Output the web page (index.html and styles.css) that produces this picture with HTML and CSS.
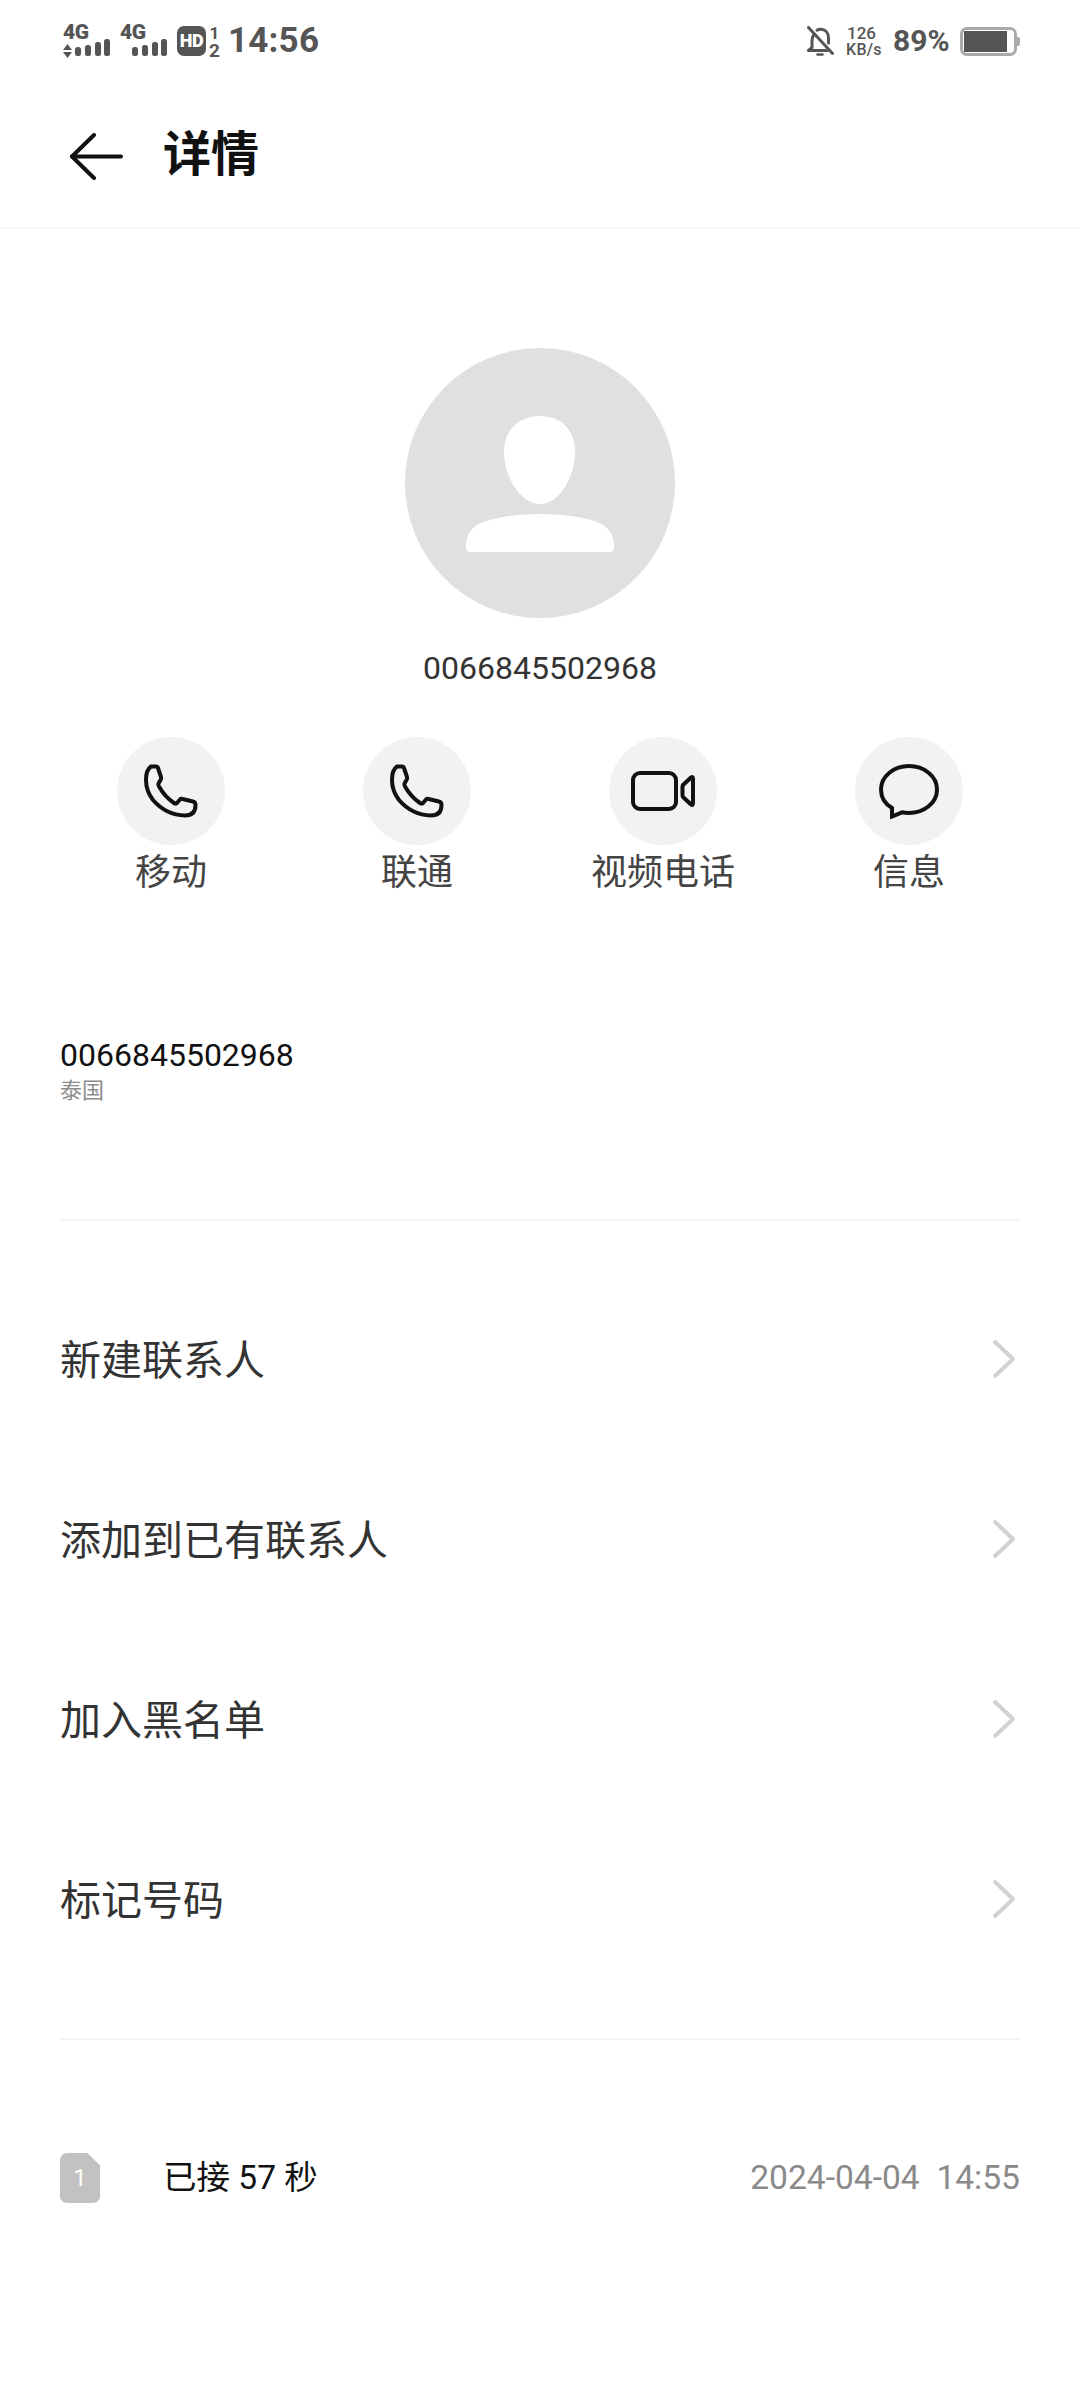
FILE: index.html
```html
<!DOCTYPE html>
<html lang="zh-CN">
<head>
<meta charset="utf-8">
<title>详情</title>
<link rel="stylesheet" href="styles.css">
</head>
<body>
<div class="page">
  <div class="status">
    <div class="status-left">
      <div class="sig">
        <span class="sig-label">4G</span>
        <svg class="sig-bars" width="47" height="19" viewBox="0 0 47 19"><path d="M4.5 5L9 11H0Z M4.5 19L0 13H9Z" fill="#555"/><rect x="12" y="8" width="6" height="9" rx="2.5" fill="#555"/><rect x="22" y="6" width="6" height="11" rx="2.5" fill="#555"/><rect x="32" y="3" width="6" height="14" rx="2.5" fill="#555"/><rect x="41" y="0" width="6" height="17" rx="2.5" fill="#555"/></svg>
      </div>
      <div class="sig">
        <span class="sig-label">4G</span>
        <svg class="sig-bars" width="47" height="19" viewBox="0 0 47 19"><rect x="12" y="8" width="6" height="9" rx="2.5" fill="#555"/><rect x="22" y="6" width="6" height="11" rx="2.5" fill="#555"/><rect x="32" y="3" width="6" height="14" rx="2.5" fill="#555"/><rect x="41" y="0" width="6" height="17" rx="2.5" fill="#555"/></svg>
      </div>
      <span class="hd">HD</span>
      <div class="sim-nums"><span class="sim-one">1</span><span class="sim-two">2</span></div>
      <span class="time">14:56</span>
    </div>
    <div class="status-right">
      <svg class="bell" width="27" height="30" viewBox="0 0 27 30" fill="none" stroke="#555" stroke-width="3" stroke-linecap="round" stroke-linejoin="round"><path d="M7 8.5C5.5 10.5 5 12.5 5 15V21.5L1.5 24.5H20.5"/><path d="M10 4.2C11 3.6 12.3 3.2 13.5 3.2C18.5 3.2 21.5 7 21.5 12V17"/><path d="M1.5 1.5L25.5 27.5"/><path d="M10.5 28.5H15.5" stroke-width="2.5"/></svg>
      <div class="speed"><span class="speed-val">126</span><span class="speed-unit">KB/s</span></div>
      <span class="pct">89%</span>
      <div class="battery"><div class="battery-fill"></div></div>
      <div class="battery-nub"></div>
    </div>
  </div>

  <header class="header">
    <svg class="back" width="54" height="47" viewBox="0 0 54 47" fill="none" stroke="#111" stroke-width="4" stroke-linecap="round" stroke-linejoin="round"><path d="M25 2L3 23.5L25 45"/><path d="M3 23.5H52"/></svg>
    <h1 class="title">详情</h1>
  </header>

  <section class="profile">
    <div class="avatar">
      <svg width="148" height="136" viewBox="0 0 148 136" fill="#fff"><path d="M74 0C95 0 109 14 109 36C109 60 94 88 74 88C54 88 38 60 38 36C38 14 53 0 74 0Z"/><path d="M74 98C100 98 120 102 131 106C142 110 148 118 148 131Q148 136 144 136H4Q0 136 0 131C0 118 6 110 17 106C28 102 48 98 74 98Z"/></svg>
    </div>
    <div class="profile-number">0066845502968</div>
  </section>

  <section class="actions">
    <div class="action">
      <div class="action-circle">
        <svg width="54" height="54" viewBox="0 0 54 54" fill="none" stroke="#111" stroke-width="4" stroke-linejoin="round"><path d="M7 2.5L12 2.5Q13.5 2.5 14 4L17 13Q17.5 14.5 16.5 16L14.5 19.5Q14 21 15 22.5Q21 33 30 39Q31.5 40 33 39L36 35.5Q37 34.5 38.5 35L49 37.5Q51.5 38 51.5 41Q51.5 51.5 41 51.5Q22 51 9 36Q2 27 2 16Q2 6 7 2.5Z"/></svg>
      </div>
      <span class="action-label">移动</span>
    </div>
    <div class="action">
      <div class="action-circle">
        <svg width="54" height="54" viewBox="0 0 54 54" fill="none" stroke="#111" stroke-width="4" stroke-linejoin="round"><path d="M7 2.5L12 2.5Q13.5 2.5 14 4L17 13Q17.5 14.5 16.5 16L14.5 19.5Q14 21 15 22.5Q21 33 30 39Q31.5 40 33 39L36 35.5Q37 34.5 38.5 35L49 37.5Q51.5 38 51.5 41Q51.5 51.5 41 51.5Q22 51 9 36Q2 27 2 16Q2 6 7 2.5Z"/></svg>
      </div>
      <span class="action-label">联通</span>
    </div>
    <div class="action">
      <div class="action-circle">
        <svg width="64" height="40" viewBox="0 0 64 40" fill="none" stroke="#111" stroke-width="4" stroke-linejoin="round"><rect x="2" y="2" width="43" height="36" rx="7"/><path d="M52 14L60 6.5Q62 5 62 8V32Q62 35 60 33.5L52 26Q51.5 25 51.5 24V16Q51.5 15 52 14Z"/></svg>
      </div>
      <span class="action-label">视频电话</span>
    </div>
    <div class="action">
      <div class="action-circle">
        <svg width="60" height="55" viewBox="0 0 60 55" fill="none" stroke="#111" stroke-width="4" stroke-linejoin="miter"><path d="M13 44C6 40 2 33 2 25.5C2 12 15 2 30 2C45 2 58 12 58 25.5C58 39 45 49 30 49C27 49 25 48.8 23 48.3L13 52.5Z"/></svg>
      </div>
      <span class="action-label">信息</span>
    </div>
  </section>

  <section class="detail">
    <div class="detail-number">0066845502968</div>
    <div class="detail-region">泰国</div>
  </section>

  <section class="menu">
    <div class="menu-row"><span class="menu-text">新建联系人</span><svg class="chev" width="24" height="40" viewBox="0 0 24 40" fill="none" stroke="#d2d2d2" stroke-width="4" stroke-linecap="round" stroke-linejoin="round"><path d="M3 3L21 20L3 37"/></svg></div>
    <div class="menu-row"><span class="menu-text">添加到已有联系人</span><svg class="chev" width="24" height="40" viewBox="0 0 24 40" fill="none" stroke="#d2d2d2" stroke-width="4" stroke-linecap="round" stroke-linejoin="round"><path d="M3 3L21 20L3 37"/></svg></div>
    <div class="menu-row"><span class="menu-text">加入黑名单</span><svg class="chev" width="24" height="40" viewBox="0 0 24 40" fill="none" stroke="#d2d2d2" stroke-width="4" stroke-linecap="round" stroke-linejoin="round"><path d="M3 3L21 20L3 37"/></svg></div>
    <div class="menu-row"><span class="menu-text">标记号码</span><svg class="chev" width="24" height="40" viewBox="0 0 24 40" fill="none" stroke="#d2d2d2" stroke-width="4" stroke-linecap="round" stroke-linejoin="round"><path d="M3 3L21 20L3 37"/></svg></div>
  </section>

  <section class="log">
    <div class="log-sim">1</div>
    <span class="log-text">已接 57 秒</span>
    <span class="log-time">2024-04-04&nbsp;&nbsp;14:55</span>
  </section>
</div>
</body>
</html>
```
FILE: styles.css
```css
* { box-sizing: border-box; }
html, body { margin: 0; padding: 0; background: #fff; }
body { font-family: Roboto, "Noto Sans CJK SC", sans-serif; color: #111; }
.page { width: 1080px; height: 2408px; overflow: hidden; }

/* status bar */
.status { height: 82px; padding: 0 60px 0 63px; display: flex; align-items: center; justify-content: space-between; color: #555; }
.status-left, .status-right { display: flex; align-items: center; }
.sig { display: flex; flex-direction: column; width: 47px; margin-right: 10px; }
.sig-label { font-size: 21px; font-weight: 900; line-height: 14px; height: 14px; letter-spacing: -0.3px; }
.sig-bars { display: block; }
.hd { width: 29px; height: 30px; border-radius: 7px; background: #555; color: #fff; font-size: 18px; font-weight: 900; line-height: 30px; text-align: center; letter-spacing: -0.5px; }
.sim-nums { width: 13px; margin: 0 7px 0 2px; display: flex; flex-direction: column; align-items: center; font-weight: 700; }
.sim-one { font-size: 17px; line-height: 15px; height: 18px; }
.sim-two { font-size: 19px; line-height: 13px; height: 13px; }
.time { font-size: 35px; font-weight: 700; line-height: 42px; letter-spacing: 0.2px; }
.bell { display: block; margin-right: 12px; }
.speed { display: flex; flex-direction: column; width: 34px; margin-right: 13px; white-space: nowrap; }
.speed-val { font-size: 17px; font-weight: 500; line-height: 17px; padding-left: 1px; }
.speed-unit { font-size: 16px; font-weight: 500; line-height: 15px; letter-spacing: 0.3px; }
.pct { font-size: 30px; font-weight: 700; line-height: 36px; width: 54px; margin-right: 13px; white-space: nowrap; }
.battery { width: 57px; height: 29px; border: 3px solid #aaa; border-radius: 7px; padding: 1px; }
.battery-fill { width: 43px; height: 100%; background: #555; }
.battery-nub { width: 3px; height: 9px; background: #aaa; border-radius: 0 2px 2px 0; }

/* header */
.header { height: 147px; padding-left: 69px; display: flex; align-items: center; border-bottom: 2px solid #f6f6f6; }
.back { display: block; margin-top: 3px; }
.title { margin: 0 0 0 40px; font-size: 48px; font-weight: 700; line-height: 60px; color: #111; }

/* profile */
.profile { padding-top: 119px; display: flex; flex-direction: column; align-items: center; }
.avatar { width: 270px; height: 270px; border-radius: 50%; background: #e0e0e0; display: flex; align-items: center; justify-content: center; }
.avatar svg { display: block; margin-top: 2px; }
.profile-number { margin-top: 30px; font-size: 32px; line-height: 40px; color: #333; }

/* quick actions */
.actions { margin-top: 49px; padding: 0 48px; display: grid; grid-template-columns: repeat(4, 246px); }
.action { display: flex; flex-direction: column; align-items: center; }
.action-circle { width: 108px; height: 108px; border-radius: 50%; background: #f2f2f2; display: flex; align-items: center; justify-content: center; }
.action-circle svg { display: block; }
.action-label { margin-top: 3px; font-size: 36px; line-height: 50px; color: #444; }

/* number detail */
.detail { margin: 137px 60px 0; padding-bottom: 113px; border-bottom: 2px solid #f5f5f5; }
.detail-number { font-size: 32px; line-height: 40px; color: #111; }
.detail-region { font-size: 22px; line-height: 30px; color: #8c8c8c; margin-top: 1px; }

/* menu */
.menu { margin: 48px 60px 0; padding-bottom: 49px; border-bottom: 2px solid #f5f5f5; }
.menu-row { height: 180px; display: flex; align-items: center; justify-content: space-between; }
.menu-text { padding-top: 3px; font-size: 41px; line-height: 56px; color: #333; }
.chev { display: block; margin-right: 4px; }

/* call log */
.log { margin: 108px 60px 0; height: 60px; display: flex; align-items: center; }
.log-sim { width: 40px; height: 50px; border-radius: 7px; background: linear-gradient(225deg, transparent 9px, #c2c2c2 9px); color: #fff; font-size: 24px; line-height: 50px; text-align: center; }
.log-text { margin-left: 63px; font-size: 33.5px; line-height: 50px; color: #111; }
.log-time { margin-left: auto; font-size: 33.6px; line-height: 50px; color: #8a8a8a; }
```
